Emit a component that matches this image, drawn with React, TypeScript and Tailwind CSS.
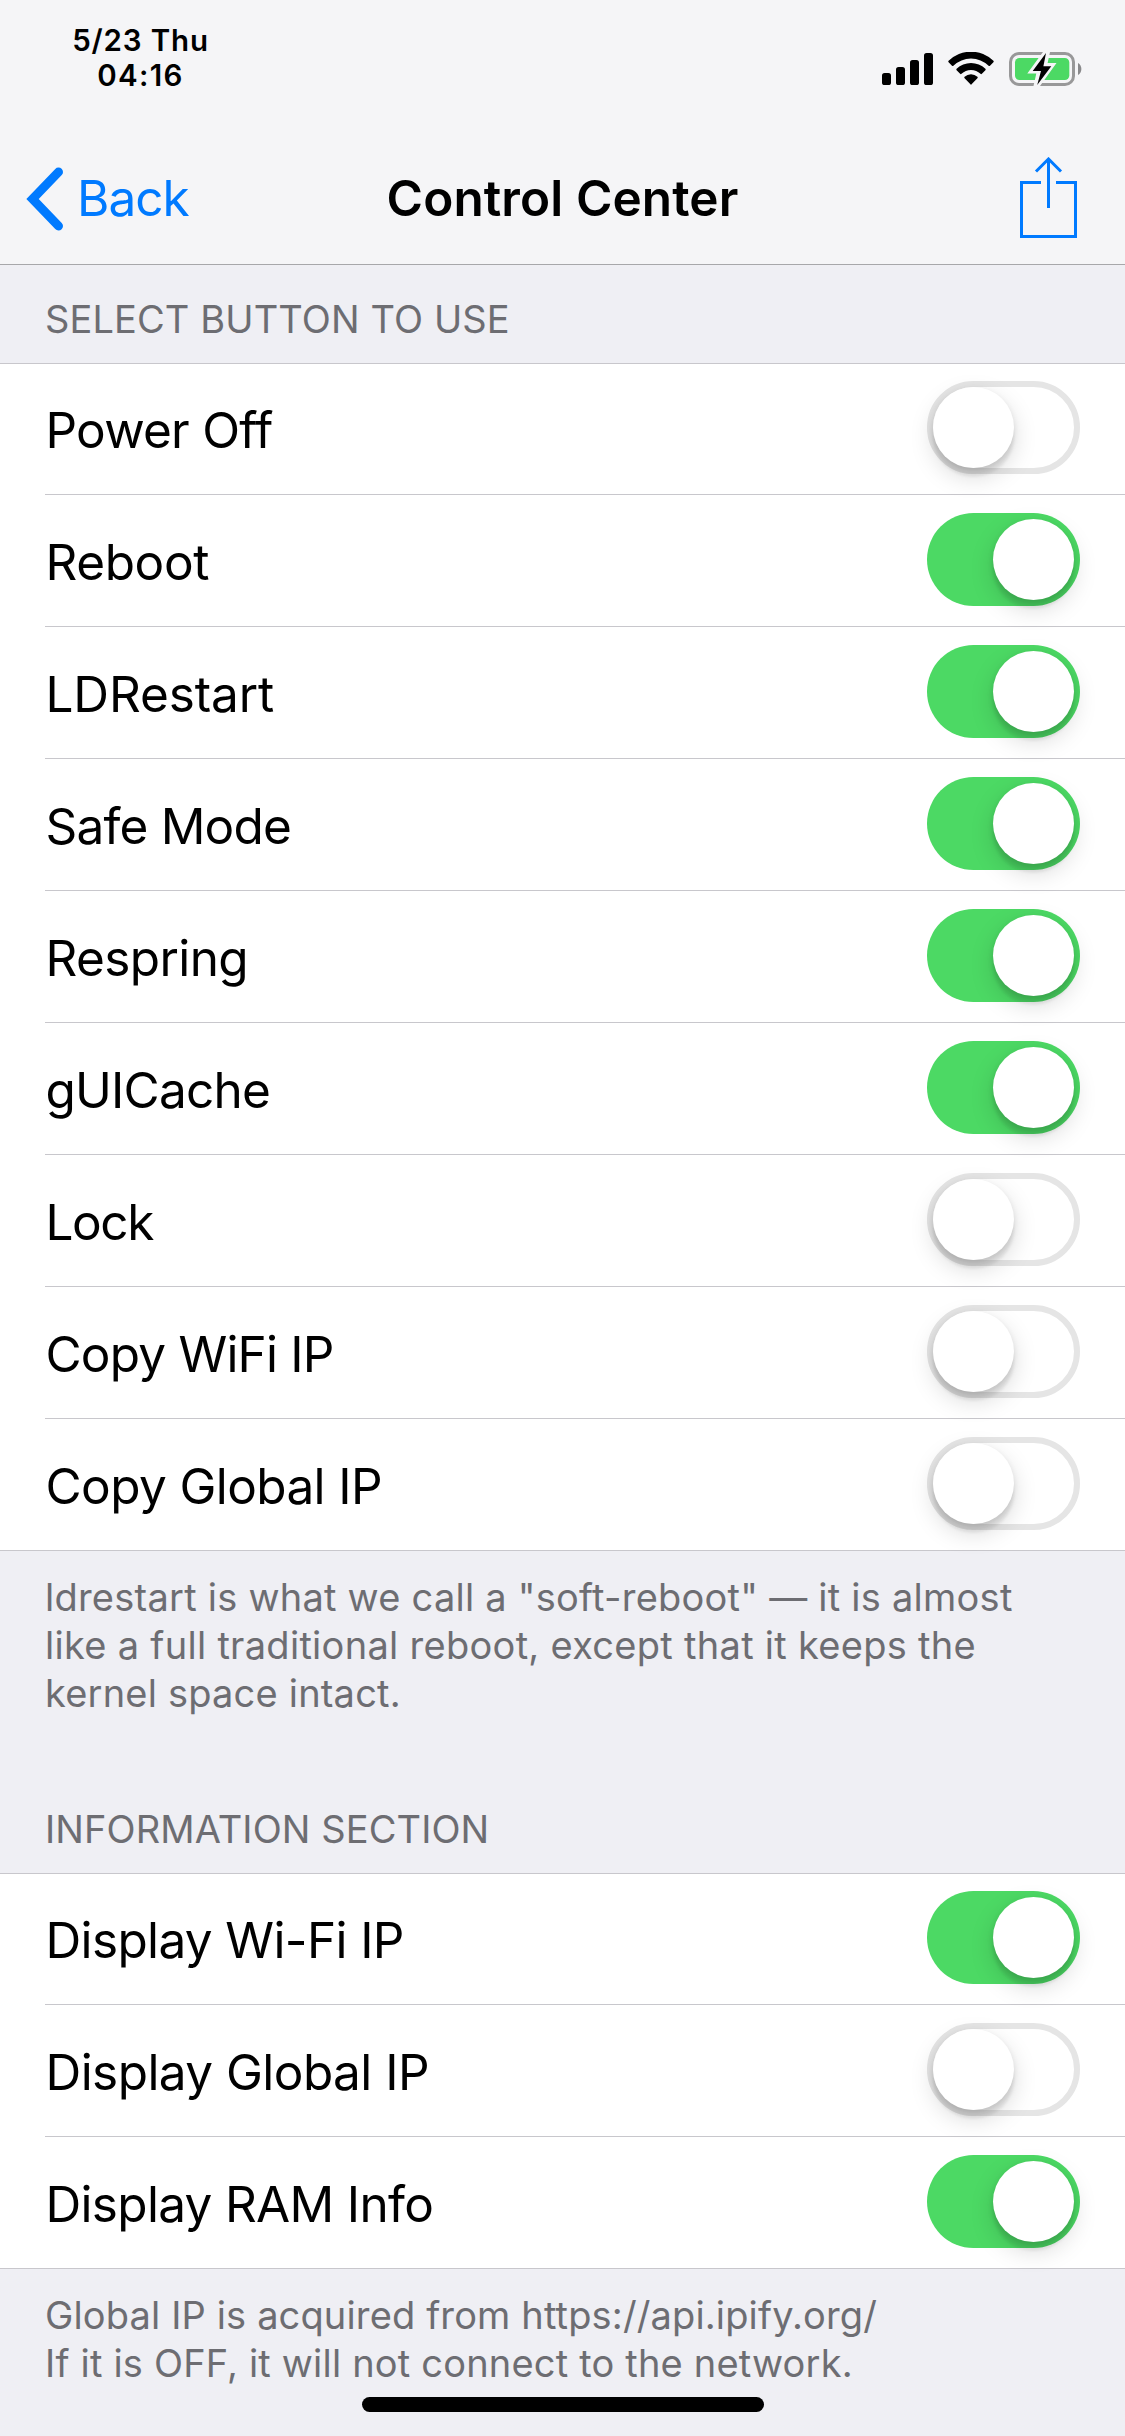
function SignalIcon() {
  return (
    <svg width="51" height="33" viewBox="0 0 51 33" className="block">
      <rect x="0" y="20" width="9" height="12" rx="2.6" />
      <rect x="14" y="14" width="9" height="18" rx="2.6" />
      <rect x="28" y="7" width="9" height="25" rx="2.6" />
      <rect x="42" y="0" width="9" height="32" rx="2.6" />
    </svg>
  );
}

function WifiIcon() {
  return (
    <svg width="46" height="33" viewBox="0 0 46 33" className="block">
      <path d="M0.6 10.2a1 1 0 0 1 0-1.4a32 32 0 0 1 44.8 0a1 1 0 0 1 0 1.4l-3.4 3.5a1 1 0 0 1-1.4 0a25.4 25.4 0 0 0-35.2 0a1 1 0 0 1-1.4 0z" />
      <path d="M8.6 18.2a1 1 0 0 1 0-1.4a20.6 20.6 0 0 1 28.8 0a1 1 0 0 1 0 1.4l-3.5 3.6a1 1 0 0 1-1.4 0a13.6 13.6 0 0 0-19 0a1 1 0 0 1-1.4 0z" />
      <path d="M16.6 26.2a1 1 0 0 1 0-1.4a9.2 9.2 0 0 1 12.8 0a1 1 0 0 1 0 1.4l-5.6 5.9a1 1 0 0 1-1.6 0z" />
    </svg>
  );
}

function BatteryIcon() {
  return (
    <svg width="73" height="34" viewBox="0 0 73 34" className="block">
      <rect x="1.5" y="1.5" width="63" height="31" rx="8.5" fill="none" stroke="#989899" strokeWidth="3" />
      <rect x="6" y="6" width="54.3" height="22" rx="4.5" fill="#4cd964" />
      <path d="M69 11a7 7 0 0 1 0 12z" fill="#89898b" />
      <path d="M34 0L18.3 21.6H27.3L24.5 34H31L47.5 11H38.6L41 0z" fill="#f5f5f7" />
      <path d="M37 1L23.7 19H32L28.2 33L42.3 14.2H34.4z" fill="#000" />
    </svg>
  );
}

function ShareIcon() {
  return (
    <svg width="57" height="81" viewBox="0 0 57 81" fill="none" stroke="#007aff" strokeWidth="3" className="mb-px block">
      <path d="M21 25.5H1.5V79.5H55.5V25.5H36" />
      <path d="M28.5 51V2" />
      <path d="M16 14.5L28.5 2L41 14.5" />
    </svg>
  );
}

function Toggle({ on }: { on: boolean }) {
  return (
    <div
      className={
        on
          ? "mt-[18px] flex h-[93px] w-[153px] shrink-0 justify-end rounded-full bg-[#4cd964] p-[6px]"
          : "mt-[18px] flex h-[93px] w-[153px] shrink-0 justify-start rounded-full border-[6px] border-[#e5e5e5] bg-white"
      }
    >
      <div className="size-[81px] rounded-full bg-white shadow-[0_9px_24px_rgba(0,0,0,0.15),0_9px_3px_rgba(0,0,0,0.06),0_3px_6px_rgba(0,0,0,0.10)]" />
    </div>
  );
}

type Item = { label: string; on: boolean; tracking: string };

const buttons: Item[] = [
  { label: "Power Off", on: false, tracking: "tracking-[-0.75px]" },
  { label: "Reboot", on: true, tracking: "tracking-[-0.4px]" },
  { label: "LDRestart", on: true, tracking: "tracking-[-0.12px]" },
  { label: "Safe Mode", on: true, tracking: "tracking-[-0.8px]" },
  { label: "Respring", on: true, tracking: "tracking-[-0.6px]" },
  { label: "gUICache", on: true, tracking: "tracking-[-0.8px]" },
  { label: "Lock", on: false, tracking: "tracking-[-1.4px]" },
  { label: "Copy WiFi IP", on: false, tracking: "tracking-[-0.8px]" },
  { label: "Copy Global IP", on: false, tracking: "tracking-[-0.6px]" },
];

const information: Item[] = [
  { label: "Display Wi-Fi IP", on: true, tracking: "tracking-[-0.64px]" },
  { label: "Display Global IP", on: false, tracking: "tracking-[-0.56px]" },
  { label: "Display RAM Info", on: true, tracking: "tracking-[-0.69px]" },
];

function List({ items }: { items: Item[] }) {
  return (
    <ul className="shrink-0 bg-white shadow-[inset_0_1px_0_#c8c7cc,inset_0_-1px_0_#c8c7cc]">
      {items.map(({ label, on, tracking }, i) => (
        <li key={label} className="pl-[45px]">
          <div
            className={
              i < items.length - 1
                ? "flex h-[132px] justify-between border-b border-[#c8c7cc] pr-[45px]"
                : "flex h-[132px] justify-between pr-[45px]"
            }
          >
            <span className={`mt-px pl-[0.5px] text-[49.5px] leading-[132px] ${tracking}`}>{label}</span>
            <Toggle on={on} />
          </div>
        </li>
      ))}
    </ul>
  );
}

export default function App() {
  return (
    <div className="flex h-[2436px] w-[1125px] flex-col overflow-hidden bg-[#efeff4] font-[Inter,sans-serif] text-black">
      <header className="h-[265px] shrink-0 border-b border-[#a7a7aa] bg-[#f5f5f7]">
        <div className="flex h-[132px] justify-between">
          <div className="w-[281px] pt-[22.5px] text-center text-[29.5px] font-[580] leading-[35px]">
            <p className="tracking-[0.85px]">5/23 Thu</p>
            <p className="tracking-[1.3px]">04:16</p>
          </div>
          <div className="flex items-start pr-[43px] pt-[52px]">
            <div className="pt-px">
              <SignalIcon />
            </div>
            <div className="ml-[15px]">
              <WifiIcon />
            </div>
            <div className="ml-[15px]">
              <BatteryIcon />
            </div>
          </div>
        </div>
        <div className="grid h-[132px] grid-cols-3 items-center text-[49.5px] leading-[132px]">
          <div className="flex items-center pl-[26px] text-[#007aff]">
            <svg width="38" height="64" viewBox="0 0 38 64" fill="none" stroke="#007aff" strokeWidth="9" strokeLinecap="round" strokeLinejoin="miter" className="mt-px block">
              <path d="M32.5 5L6.6 32L32.5 59" />
            </svg>
            <span className="ml-[13px] tracking-[-0.95px]">Back</span>
          </div>
          <h1 className="whitespace-nowrap text-center font-semibold tracking-[0.1px]">Control Center</h1>
          <div className="flex justify-end pr-[48px]">
            <ShareIcon />
          </div>
        </div>
      </header>

      <h2 className="h-[98px] shrink-0 pl-[45px] pt-[30px] text-[38px] leading-[48px] tracking-[0.11px] text-[#6d6d72]">
        SELECT BUTTON TO USE
      </h2>
      <List items={buttons} />
      <div className="shrink-0 pl-[45px] pt-[22px] text-[38px] leading-[48px] text-[#6d6d72]">
        <p className="tracking-[0.24px]">ldrestart is what we call a "soft-reboot" — it is almost</p>
        <p className="tracking-[0.29px]">like a full traditional reboot, except that it keeps the</p>
        <p className="tracking-[0.2px]">kernel space intact.</p>
      </div>

      <h2 className="mt-[58px] h-[98px] shrink-0 pl-[45px] pt-[30px] text-[38px] leading-[48px] tracking-[0.09px] text-[#6d6d72]">
        INFORMATION SECTION
      </h2>
      <List items={information} />
      <div className="shrink-0 pl-[45px] pt-[22px] text-[38px] leading-[48px] text-[#6d6d72]">
        <p className="tracking-[0.14px]">Global IP is acquired from https://api.ipify.org/</p>
        <p className="tracking-[0.19px]">If it is OFF, it will not connect to the network.</p>
      </div>
      <div className="ml-[362px] mt-[10px] h-[15px] w-[402px] shrink-0 rounded-full bg-black" />
    </div>
  );
}
